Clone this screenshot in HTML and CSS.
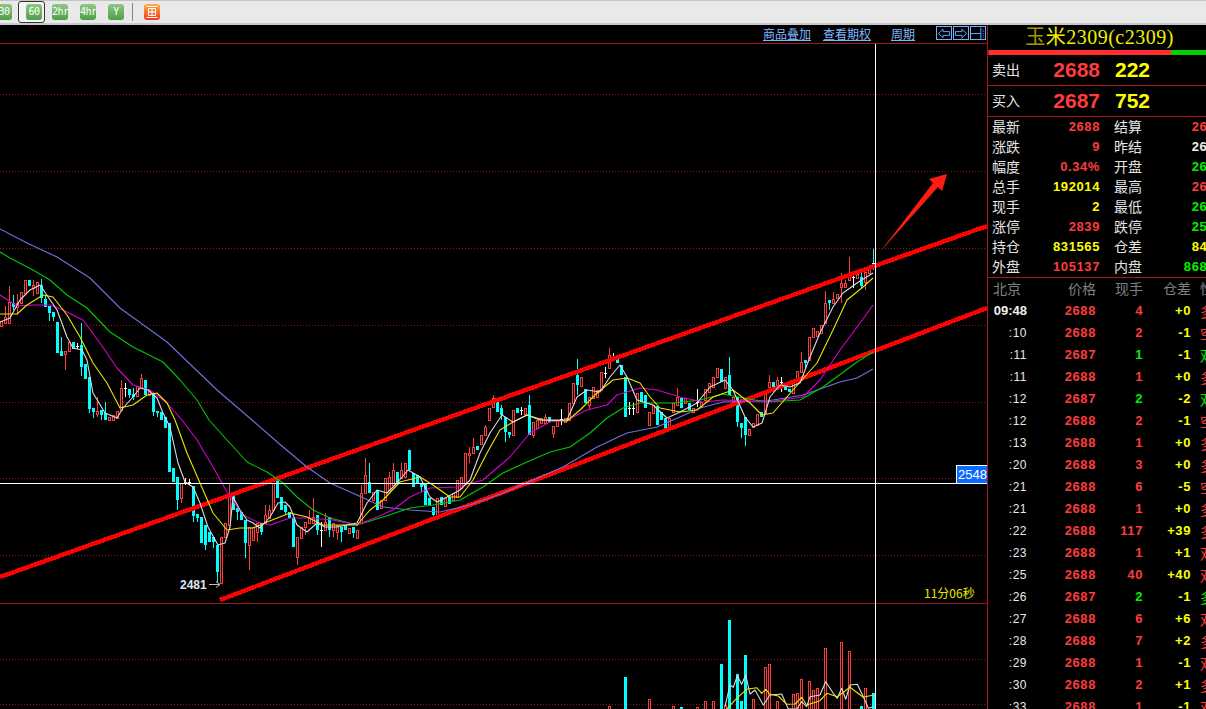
FILE: index.html
```html
<!DOCTYPE html>
<html lang="zh">
<head>
<meta charset="utf-8">
<title>玉米2309</title>
<link rel="stylesheet" href="styles.css">
</head>
<body>
<div class="toolbar">
  <div class="tool tool-first">30</div>
  <div class="tool-selected"><div class="tool">60</div></div>
  <div class="tool">2hr</div>
  <div class="tool">4hr</div>
  <div class="tool">Y</div>
  <div class="tool-sep"></div>
  <div class="tool-orange">
    <svg width="12" height="12" viewBox="0 0 12 12"><path class="icon-white" d="M0.5 0.5H11.5M2.5 2.5H9.5V9.5H2.5ZM2.5 6H9.5M6 2.5V9.5M0.5 11.5H11.5"/></svg>
  </div>
</div>
<div class="main">
  <div class="chart">
    <div class="chart-head">
      <a class="link link-a">商品叠加</a>
      <a class="link link-b">查看期权</a>
      <a class="link link-c">周期</a>
      <div class="nav">
        <div class="nav-btn"><svg width="15" height="13" viewBox="0 0 15 13"><path class="icon-blue" d="M13.5 4.5H6.5V2L1.5 6.5L6.5 11V8.5H13.5Z"/></svg></div>
        <div class="nav-btn"><svg width="15" height="13" viewBox="0 0 15 13"><path class="icon-blue" d="M1.5 4.5H8.5V2L13.5 6.5L8.5 11V8.5H1.5Z"/></svg></div>
        <div class="nav-btn"><svg width="15" height="13" viewBox="0 0 15 13"><path class="icon-blue" d="M0 6.5H10.5M10.5 0V13"/><path class="icon-dots" d="M13 2V11"/></svg></div>
      </div>
    </div>
    <svg id="plot" class="plot" width="987" height="665" viewBox="0 44 987 665">
      <g id="grid"></g>
      <g id="candles" shape-rendering="crispEdges"></g>
      <g id="volumes" shape-rendering="crispEdges"></g>
      <line class="trend" x1="0" y1="577" x2="987" y2="226"/>
      <line class="trend" x1="220" y1="600" x2="987" y2="308"/>
      <g id="lines"></g>
      <polygon class="arrow" points="880,252 933,183 929,179 947,174 942,191 938,187"/>
      <line class="solid" x1="0" y1="603.5" x2="987" y2="603.5"/>
      <line class="cross" x1="875.5" y1="44" x2="875.5" y2="709"/>
      <line class="cross" x1="0" y1="483.5" x2="987" y2="483.5"/>
      <text class="low-label" x="180" y="589">2481</text>
      <path class="low-arrow" d="M209 584.5H220M216 581.5L220 584.5L216 587.5"/>
      <text class="timer" x="924" y="598">11分06秒</text>
      <rect class="tag-box" x="956.5" y="465.5" width="31" height="18"/>
      <text class="tag-text" x="958" y="479">2548</text>
    </svg>
  </div>
  <aside class="panel">
    <div class="title"><span class="dim">玉</span>米2309(c2309)</div>
    <div class="ratio"><div class="ratio-red"></div><div class="ratio-green"></div></div>
    <div class="quote"><span class="label">卖出</span><span class="big red">2688</span><span class="qty yellow">222</span></div>
    <div class="quote"><span class="label">买入</span><span class="big red">2687</span><span class="qty yellow">752</span></div>
    <div class="info">
      <div class="cell"><span class="label">最新</span><b class="red">2688</b></div><div class="cell"><span class="label">结算</span><b class="red">2682</b></div>
      <div class="cell"><span class="label">涨跌</span><b class="red">9</b></div><div class="cell"><span class="label">昨结</span><b class="white">2679</b></div>
      <div class="cell"><span class="label">幅度</span><b class="red">0.34%</b></div><div class="cell"><span class="label">开盘</span><b class="green">2669</b></div>
      <div class="cell"><span class="label">总手</span><b class="yellow">192014</b></div><div class="cell"><span class="label">最高</span><b class="red">2694</b></div>
      <div class="cell"><span class="label">现手</span><b class="yellow">2</b></div><div class="cell"><span class="label">最低</span><b class="green">2662</b></div>
      <div class="cell"><span class="label">涨停</span><b class="red">2839</b></div><div class="cell"><span class="label">跌停</span><b class="green">2519</b></div>
      <div class="cell"><span class="label">持仓</span><b class="yellow">831565</b></div><div class="cell"><span class="label">仓差</span><b class="yellow">8412</b></div>
      <div class="cell"><span class="label">外盘</span><b class="red">105137</b></div><div class="cell"><span class="label">内盘</span><b class="green">86877</b></div>
    </div>
    <div class="tick tick-head"><span class="t-time">北京</span><span>价格</span><span>现手</span><span>仓差</span><span class="t-kind">性质</span></div>
    <div class="tick"><b class="t-time t-main">09:48</b><b class="red">2688</b><b class="red">4</b><b class="yellow">+0</b><span class="t-kind red">多</span></div>
    <div class="tick"><span class="t-time t-sub">:10</span><b class="red">2688</b><b class="red">2</b><b class="yellow">-1</b><span class="t-kind red">空</span></div>
    <div class="tick"><span class="t-time t-sub">:11</span><b class="red">2687</b><b class="green">1</b><b class="yellow">-1</b><span class="t-kind green">双</span></div>
    <div class="tick"><span class="t-time t-sub">:11</span><b class="red">2688</b><b class="red">1</b><b class="yellow">+0</b><span class="t-kind red">多</span></div>
    <div class="tick"><span class="t-time t-sub">:12</span><b class="red">2687</b><b class="green">2</b><b class="yellow">-2</b><span class="t-kind green">双</span></div>
    <div class="tick"><span class="t-time t-sub">:12</span><b class="red">2688</b><b class="red">2</b><b class="yellow">-1</b><span class="t-kind red">空</span></div>
    <div class="tick"><span class="t-time t-sub">:13</span><b class="red">2688</b><b class="red">1</b><b class="yellow">+0</b><span class="t-kind red">多</span></div>
    <div class="tick"><span class="t-time t-sub">:20</span><b class="red">2688</b><b class="red">3</b><b class="yellow">+0</b><span class="t-kind red">多</span></div>
    <div class="tick"><span class="t-time t-sub">:21</span><b class="red">2688</b><b class="red">6</b><b class="yellow">-5</b><span class="t-kind red">空</span></div>
    <div class="tick"><span class="t-time t-sub">:21</span><b class="red">2688</b><b class="red">1</b><b class="yellow">+0</b><span class="t-kind red">多</span></div>
    <div class="tick"><span class="t-time t-sub">:22</span><b class="red">2688</b><b class="red">117</b><b class="yellow">+39</b><span class="t-kind red">多</span></div>
    <div class="tick"><span class="t-time t-sub">:23</span><b class="red">2688</b><b class="red">1</b><b class="yellow">+1</b><span class="t-kind red">双</span></div>
    <div class="tick"><span class="t-time t-sub">:25</span><b class="red">2688</b><b class="red">40</b><b class="yellow">+40</b><span class="t-kind red">双</span></div>
    <div class="tick"><span class="t-time t-sub">:26</span><b class="red">2687</b><b class="green">2</b><b class="yellow">-1</b><span class="t-kind green">多</span></div>
    <div class="tick"><span class="t-time t-sub">:27</span><b class="red">2688</b><b class="red">6</b><b class="yellow">+6</b><span class="t-kind red">双</span></div>
    <div class="tick"><span class="t-time t-sub">:28</span><b class="red">2688</b><b class="red">7</b><b class="yellow">+2</b><span class="t-kind red">多</span></div>
    <div class="tick"><span class="t-time t-sub">:29</span><b class="red">2688</b><b class="red">1</b><b class="yellow">-1</b><span class="t-kind red">双</span></div>
    <div class="tick"><span class="t-time t-sub">:30</span><b class="red">2688</b><b class="red">2</b><b class="yellow">+1</b><span class="t-kind red">多</span></div>
    <div class="tick"><span class="t-time t-sub">:33</span><b class="red">2688</b><b class="red">1</b><b class="yellow">-1</b><span class="t-kind red">双</span></div>
  </aside>
</div>
<script src="chart.js"></script>
</body>
</html>
```
FILE: styles.css
```css
* { box-sizing: border-box; }
html, body { margin: 0; padding: 0; width: 1206px; height: 709px; overflow: hidden; background: #000; }
body { font-family: "Liberation Sans", "Noto Sans CJK SC", sans-serif; color: #e0e0e0; }

.toolbar {
  height: 25px; display: flex; align-items: center; overflow: hidden;
  background: #e9e9e9; border-top: 1px solid #c4c4c4; border-bottom: 2px solid #c8c8c8;
}
.tool {
  width: 16px; height: 16px; flex: none; margin-left: 12px; border-radius: 3px;
  background: linear-gradient(#8cc884, #4f9e48); color: #fff;
  font: 10px/16px "DejaVu Sans Mono", monospace; text-align: center; letter-spacing: -0.5px;
}
.tool-first { margin-left: -4px; }
.tool-selected {
  width: 27px; height: 22px; flex: none; margin: 0 -5px 0 6px; padding: 2px 0 0 7px;
  border: 1px solid #333; border-radius: 3px; background: #f4f4f4;
}
.tool-selected .tool { margin-left: 0; }
.tool-sep { width: 1px; height: 18px; flex: none; margin-left: 8px; background: #888; }
.tool-orange {
  width: 16px; height: 16px; flex: none; margin-left: 11px; padding: 2px; border-radius: 3px;
  background: linear-gradient(#ffb040, #f03a20); display: flex;
}
.icon-white { fill: none; stroke: #fff; stroke-width: 1; }

.main { display: flex; height: 684px; }
.chart { width: 987px; flex: none; display: flex; flex-direction: column; }
.chart-head { height: 19px; flex: none; display: flex; border-bottom: 1px solid #a81818; position: relative; }
.link { font: 12px/16px "Noto Sans CJK SC", sans-serif; color: #80b8ff; text-decoration: underline; margin-top: 1px; }
.link-a { margin-left: 763px; }
.link-b { margin-left: 12px; }
.link-c { margin-left: 20px; }
.nav { display: flex; gap: 1px; margin-left: 21px; margin-top: 1px; }
.nav-btn { width: 16px; height: 14px; border: 1px solid #70b0ff; overflow: hidden; display: flex; }
.icon-blue { fill: none; stroke: #70b0ff; stroke-width: 1; }
.icon-dots { fill: none; stroke: #70b0ff; stroke-width: 1; stroke-dasharray: 1 1; }
.plot { display: block; flex: none; }

.grid-dot { stroke: #961414; stroke-width: 1; stroke-dasharray: 1 2; shape-rendering: crispEdges; }
.solid { stroke: #a81818; stroke-width: 1; }
.trend { stroke: #ff0000; stroke-width: 4.4; shape-rendering: crispEdges; }
.arrow { fill: #ff1c14; }
.cross { stroke: #fff; stroke-width: 1; shape-rendering: crispEdges; }
.ma { fill: none; stroke-width: 1.1; stroke-linejoin: round; }
.ma-white { stroke: #dcdcdc; }
.ma-yellow { stroke: #e8e800; }
.ma-magenta { stroke: #d400d4; }
.ma-green { stroke: #00c800; }
.ma-blue { stroke: #7070e0; }
.bar-red { fill: #000; stroke: #ff3c3c; stroke-width: 1; }
.bar-cyan { fill: #00ffff; }
.bar-white { fill: #fff; }
.wick-red { stroke: #ff3c3c; stroke-width: 1; }
.wick-cyan { stroke: #00ffff; stroke-width: 1; }
.wick-white { stroke: #fff; stroke-width: 1; }
.low-label { font: bold 12px "Liberation Sans", sans-serif; fill: #dce6f0; }
.low-arrow { fill: none; stroke: #c0c0c0; stroke-width: 1; }
.timer { font: 12px "Noto Sans CJK SC", sans-serif; fill: #e8e800; }
.tag-box { fill: #0a6cff; stroke: #fff; stroke-width: 1; }
.tag-text { font: 13px "Liberation Sans", sans-serif; fill: #fff; }

.panel { width: 219px; flex: none; height: 684px; border-left: 1px solid #a81818; overflow: hidden; }
.title {
  height: 25px; text-align: center; padding-left: 5px; white-space: nowrap; letter-spacing: 0.5px;
  font: 20px/25px "Liberation Serif", "Noto Sans CJK SC", serif; color: #f0f000;
}
.dim { color: #a89800; }
.ratio { height: 5px; display: flex; }
.ratio-red { width: 183px; background: #ff3030; border-left: 1px solid #a81818; }
.ratio-green { flex: 1; background: #00d000; }
.quote {
  height: 31px; display: flex; align-items: center; padding-left: 4px; border-bottom: 1px solid #a81818;
}
.label { font: 14px/20px "Noto Sans CJK SC", sans-serif; color: #e4e4e4; flex: none; padding-bottom: 2px; }
.big { width: 80px; text-align: right; font: bold 21px/30px "Liberation Sans", sans-serif; flex: none; }
.qty { margin-left: 15px; font: bold 21px/30px "Liberation Sans", sans-serif; flex: none; }
.red { color: #ff3c3c; }
.yellow { color: #ffff00; }
.green { color: #00f000; }
.white { color: #f0f0f0; }
.info {
  height: 161px; padding-left: 4px; border-bottom: 1px solid #a81818;
  display: grid; grid-template-columns: 108px 109px; grid-auto-rows: 20px; column-gap: 14px; width: 240px;
}
.cell { display: flex; justify-content: space-between; align-items: center; white-space: nowrap; }
.cell b, .tick b { font: bold 13px/20px "Liberation Sans", sans-serif; letter-spacing: 0.6px; }
.tick {
  height: 22px; padding-left: 5px; width: 240px;
  display: grid; grid-template-columns: 34px 69px 47px 48px auto; align-items: center;
  text-align: right; white-space: nowrap;
}
.tick-head { font: 14px/20px "Noto Sans CJK SC", sans-serif; color: #808080; padding-bottom: 2px; }
.tick-head .t-time { text-align: left; }
.t-time { text-align: right; }
.tick b.t-main { font: bold 13px/22px "Liberation Sans", sans-serif; color: #f0f0f0; letter-spacing: 0; }
.t-sub { font: 12px/22px "Liberation Sans", sans-serif; color: #e8e8e8; letter-spacing: 0.5px; }
.t-kind { margin-left: 9px; text-align: left; font: 14px/20px "Noto Sans CJK SC", sans-serif; }
```
FILE: chart.js
```js
var NS = 'http://www.w3.org/2000/svg';
function el(parent, name, attrs) {
  var n = document.createElementNS(NS, name);
  for (var k in attrs) n.setAttribute(k, attrs[k]);
  parent.appendChild(n);
  return n;
}

var grid = document.getElementById('grid');
[94, 171, 248, 325, 402, 478, 555, 659, 704].forEach(function (y) {
  el(grid, 'line', { 'class': 'grid-dot', x1: 0, y1: y + 0.5, x2: 987, y2: y + 0.5 });
});

/* candles: type top,bottom[,wickTop[,wickBottom]] in zoomed (3x) units */
var candles = document.getElementById('candles');
function wick(x, a, b, cls) {
  el(candles, 'line', { 'class': cls, x1: x + 0.5, y1: a, x2: x + 0.5, y2: b });
}
function section(x, ox, oy, s) {
  s.trim().split(/\s+/).forEach(function (item) {
    var t = item[0], p = item.slice(1).split(',');
    var conv = function (v) { return Math.round(oy + (+v) / 3); };
    var top = conv(p[0]), bot = conv(p[1]);
    var wt = p[2] ? conv(p[2]) : top, wb = p[3] ? conv(p[3]) : bot;
    var wc = t === 'r' ? 'wick-red' : (t === 'w' ? 'wick-white' : 'wick-cyan');
    wick(x, wt, wb, wc);
    if (t === 'r') {
      el(candles, 'rect', { 'class': 'bar-red', x: x - 0.5, y: top + 0.5, width: 2, height: Math.max(bot - top, 1) });
    } else {
      var cls = t === 'c' ? 'bar-cyan' : 'bar-white';
      el(candles, 'rect', { 'class': cls, x: x - 1, y: top, width: 3, height: Math.max(bot - top, 1) });
    }
    x += 4;
  });
}
section(1, 0, 220, 'r302,318 r290,308,258 r245,308,198 c250,262,225,270 r250,262,222,285 r215,250 r180,218 c180,198 r195,205,180,228 r186,220 c195,235,177,250 c237,262,225 c258,280,,303 c275,292,,302 c305,398 c392,408,350 r393,403,,450 r365,393 c367,388 w378,378,368,388 c375,440,310,468 c433,478 c472,568,,580 c565,575,,595 r573,581,530,590 c570,585,,600 c580,600,547 r590,600 r585,600 r572,595 r505,570,480 w505,505,490,530 c508,525,,535 c522,530,505,540 r498,528 r475,500,462 c480,525 r510,525 c520,575,,588 c572,578,,590 c575,600');
section(165, 150, 420, 'c-10,25 c10,155 c145,185 c170,240,,270 r190,235,,250 w187,187,175,195 w187,187,178,195 c197,288,,305 c283,293,,305 c290,370 c315,375,,390 c335,365 c350,365,,385 c375,455,,485 r350,490 r310,350 r225,315,190 c225,270 c265,275,,300 c275,300 c300,370,,415 r320,375,,450 r320,360 r310,335,,365 c310,335,,345 r285,310,255 r270,295,255 r190,270 c175,235 c230,270 c255,275,,285 c275,295 c295,380 r352,410,,435 r320,355 r305,322,,345 r295,310,270 r290,310,235 c285,330,,345 w330,330,305,380 r305,330,280 c290,330,,350 r310,330,,350 r315,335,,360 c320,335,,365 c318,330 r325,340 c320,340,,355 r330,355');
section(361, 150, 420, 'r220,310,195 r165,220,115 c185,220,130 r215,240 c210,270 r240,265 r175,240 r170,210,155 r150,195,130 c155,190 r150,175,130 r130,170 c90,150 c160,200 c165,190 c190,200,,215 c190,255 c235,255 c260,285,,300 r235,285');
section(441, 440, 340, 'c470,495 r475,497 c472,492 r460,480 r420,470 r412,445 r340,430 r338,345,320,370 r322,340,295 c318,330 r285,312 r262,285,255 r205,240 r175,200,165 c180,215 c205,225,195,240 c230,275,,305 c275,285,,295 r210,285 c203,218 w210,210,200,225 r205,222 c195,285,165 r245,285,,295 r240,265 r235,250 r232,250,222 c230,245 r258,280,,295 r240,258 w238,238,208,255 r235,245 r188,240 r130,190 c105,135,57,165 r110,138 c148,190 r172,195,,210 r140,175 r150,170 r95,150 w100,100,80,115 r45,85,25 w50,50,40,60 c50,70 c75,105 c110,230 w205,205,185,225 w205,205,190,225 r160,215 c155,185 c165,205 r215,255 r195,218 c198,255 c215,240 c235,270 r235,262 r190,215 r170,195,145 c175,205 r175,190 c190,210 r205,215 w185,185,148,200 r185,200 r148,180 r130,155 r110,140 r85,112 c87,125 r110,145 c105,165,50 r170,185 c170,245,,260');
section(741, 700, 160, 'c790,805,,835 c770,825,,857 r808,825 r790,802 r762,795 c755,770 r700,760 r665,680,645 c665,680,,695 r660,680,650 w665,665,650,695 c668,690 c687,697 r670,700 r632,670 r607,635,575 c600,610,,625 r530,600 r505,530 r512,527 r495,520 r428,490,393 c420,430,,450 r418,430,395 r403,415 r370,380,340,430 r370,380,360 r348,360,292 w350,350,340,385 r342,355 c350,378,328,385 r335,365,,390 r325,340,315');
wick(873, 249, 270, 'wick-cyan');
el(candles, 'rect', { 'class': 'bar-white', x: 872, y: 263, width: 3, height: 4 });

/* moving averages, real pixel coordinates */
var lines = document.getElementById('lines');
var mas = {
  'ma-blue': '0,229 27,243 57,257 90,278 120,308 167,342 217,390 252,420 283,447 307,467 330,483 357,495 383,507 410,510 440,512 470,505 503,493 563,467 597,447 627,433 657,427 680,417 700,408 723,402 767,401 803,395 840,382 857,378 873,369',
  'ma-green': '0,252 10,258 33,270 50,280 67,295 87,308 110,332 133,347 163,362 180,380 197,400 209,420 227,440 247,462 267,472 283,483 297,497 313,510 330,518 357,525 383,517 410,508 433,505 460,500 483,487 503,473 527,462 550,452 570,447 590,433 607,418 623,408 640,403 673,403 700,400 723,394 743,398 767,402 800,400 823,387 857,362 873,352',
  'ma-magenta': '0,295 17,306 33,305 50,305 63,310 83,320 100,343 117,368 133,385 150,390 167,403 182,420 197,440 213,467 227,492 243,515 257,522 270,525 290,518 310,518 333,520 357,525 377,517 393,510 410,497 430,488 457,487 483,480 510,457 530,433 550,422 567,420 587,410 607,405 617,395 640,388 657,390 680,397 703,402 723,400 767,402 803,397 820,380 840,350 860,323 873,305',
  'ma-yellow': '0,314 17,314 27,305 43,295 53,297 67,315 80,337 93,363 107,383 120,408 133,405 147,395 157,393 167,403 175,420 187,453 200,483 213,513 227,530 240,528 253,528 267,522 290,513 307,517 323,525 357,525 370,510 383,500 400,482 420,477 433,485 440,490 450,497 460,497 473,480 487,453 500,430 513,422 527,415 543,420 567,421 580,410 597,393 613,380 627,378 640,383 650,397 660,408 680,412 697,410 713,397 733,390 750,403 762,415 773,413 793,390 817,363 833,330 847,300 863,287 873,278',
  'ma-white': '0,322 10,318 20,300 30,290 40,285 57,310 67,337 73,348 82,350 87,360 93,393 105,413 117,418 123,408 133,397 140,388 148,390 157,398 163,413 170,427 178,463 185,482 193,487 200,503 208,527 218,545 225,543 230,527 233,497 240,510 247,520 253,523 260,528 270,517 278,503 285,502 290,507 297,525 307,532 317,523 325,527 337,527 357,523 367,503 377,490 387,493 397,483 408,470 420,477 430,497 437,502 447,497 460,490 470,480 480,453 490,433 502,415 513,422 527,415 540,420 567,420 577,397 587,390 600,392 610,377 620,365 627,377 637,400 653,405 667,418 680,412 697,403 710,387 725,380 733,390 745,417 753,427 762,423 770,397 780,385 790,387 800,383 810,357 820,333 833,307 843,293 857,283 873,273'
};
for (var c in mas) el(lines, 'polyline', { 'class': 'ma ' + c, points: mas[c] });

/* volume pane */
var vols = document.getElementById('volumes');
[[609,706,'r'],[625,677,'c'],[649,699,'r'],[673,706,'r'],[681,707,'c'],[697,707,'r'],[705,701,'r'],[713,701,'r'],[721,664,'c'],[725,705,'r'],[729,620,'c'],[737,674,'c'],[741,701,'c'],[745,655,'c'],[753,699,'r'],[765,667,'r'],[769,664,'r'],[777,701,'r'],[793,694,'r'],[797,693,'r'],[801,679,'r'],[809,681,'r'],[813,690,'r'],[817,688,'r'],[825,648,'r'],[841,642,'r'],[849,651,'r'],[861,706,'c'],[865,688,'r'],[873,693,'c']].forEach(function (v) {
  if (v[2] === 'c') el(vols, 'rect', { 'class': 'bar-cyan', x: v[0] - 1, y: v[1], width: 3, height: 709 - v[1] });
  else el(vols, 'rect', { 'class': 'bar-red', x: v[0] - 0.5, y: v[1] + 0.5, width: 2, height: 712 - v[1] });
});
function zoomLine(cls, s) {
  var pts = s.split(' ').map(function (p) {
    var a = p.split(',');
    return (600 + a[0] / 3).toFixed(1) + ',' + (590 + a[1] / 3).toFixed(1);
  }).join(' ');
  el(lines, 'polyline', { 'class': 'ma ' + cls, points: pts });
}
zoomLine('ma-white', '375,350 390,285 400,292 412,258 425,283 437,255 450,312 465,300 490,345 510,315 545,312 565,357 590,357 605,335 620,350 630,320 660,315 677,275 700,310 712,325 725,295 737,328 750,285 772,283 790,320 805,355 820,350');
zoomLine('ma-yellow', '380,357 410,325 440,298 470,293 485,310 497,298 510,313 535,318 560,343 585,342 605,322 620,345 660,332 680,310 712,320 750,292 790,322 820,315');
```
